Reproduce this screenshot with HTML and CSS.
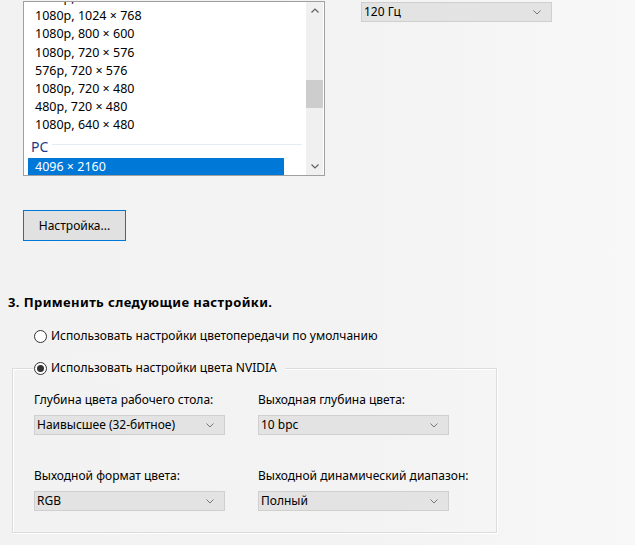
FILE: index.html
```html
<!DOCTYPE html>
<html lang="ru">
<head>
<meta charset="utf-8">
<link rel="stylesheet" href="styles.css">
</head>
<body>
<div class="page">
  <div class="top-row">
    <div class="listbox">
      <div class="list">
        <div class="list-items">
          <div class="item">1080p, 1152 × 864</div>
          <div class="item">1080p, 1024 × 768</div>
          <div class="item">1080p, 800 × 600</div>
          <div class="item">1080p, 720 × 576</div>
          <div class="item">576p, 720 × 576</div>
          <div class="item">1080p, 720 × 480</div>
          <div class="item">480p, 720 × 480</div>
          <div class="item">1080p, 640 × 480</div>
          <div class="group-header"><span>PC</span><span class="sep"></span></div>
          <div class="item selected">4096 × 2160</div>
        </div>
      </div>
      <div class="scrollbar">
        <div class="sb-arrow"><svg width="8" height="5" viewBox="0 0 8 5"><path d="M0.5 4.5 L4 1 L7.5 4.5" fill="none" stroke="#606060" stroke-width="1.2"/></svg></div>
        <div class="sb-track"><div class="sb-thumb"></div></div>
        <div class="sb-arrow"><svg width="8" height="5" viewBox="0 0 8 5"><path d="M0.5 0.5 L4 4 L7.5 0.5" fill="none" stroke="#606060" stroke-width="1.2"/></svg></div>
      </div>
    </div>
    <div class="select refresh"><span>120 Гц</span><svg class="chev" width="8" height="5" viewBox="0 0 8 5"><path d="M0.5 0.5 L4 4 L7.5 0.5" fill="none" stroke="#777" stroke-width="1"/></svg></div>
  </div>

  <button class="btn">Настройка...</button>

  <h3 class="heading">3. Применить следующие настройки.</h3>

  <div class="radio-row first">
    <span class="radio"></span><span>Использовать настройки цветопередачи по умолчанию</span>
  </div>

  <div class="group">
    <div class="radio-row legend">
      <span class="radio checked"></span><span>Использовать настройки цвета NVIDIA</span>
    </div>
    <div class="grid">
      <div class="field">
        <div class="label">Глубина цвета рабочего стола:</div>
        <div class="select"><span>Наивысшее (32-битное)</span><svg class="chev" width="8" height="5" viewBox="0 0 8 5"><path d="M0.5 0.5 L4 4 L7.5 0.5" fill="none" stroke="#777" stroke-width="1"/></svg></div>
      </div>
      <div class="field">
        <div class="label">Выходная глубина цвета:</div>
        <div class="select"><span>10 bpc</span><svg class="chev" width="8" height="5" viewBox="0 0 8 5"><path d="M0.5 0.5 L4 4 L7.5 0.5" fill="none" stroke="#777" stroke-width="1"/></svg></div>
      </div>
      <div class="field">
        <div class="label">Выходной формат цвета:</div>
        <div class="select"><span>RGB</span><svg class="chev" width="8" height="5" viewBox="0 0 8 5"><path d="M0.5 0.5 L4 4 L7.5 0.5" fill="none" stroke="#777" stroke-width="1"/></svg></div>
      </div>
      <div class="field">
        <div class="label">Выходной динамический диапазон:</div>
        <div class="select"><span>Полный</span><svg class="chev" width="8" height="5" viewBox="0 0 8 5"><path d="M0.5 0.5 L4 4 L7.5 0.5" fill="none" stroke="#777" stroke-width="1"/></svg></div>
      </div>
    </div>
  </div>
</div>
</body>
</html>
```

FILE: styles.css
```css
html, body {
  margin: 0;
  padding: 0;
}
body {
  background: linear-gradient(to right, #f2f2f2 0%, #f3f3f3 60%, #f8f8f8 100%);
  font-family: "Noto Sans", "Open Sans", sans-serif;
  font-size: 12px;
  color: #000;
  width: 635px;
  height: 545px;
  overflow: hidden;
}
.page {
  padding-top: 1px;
}
.top-row {
  display: flex;
  align-items: flex-start;
  padding-left: 23px;
}
.listbox {
  width: 300px;
  height: 173px;
  border: 1px solid #a0a0a0;
  background: #fff;
  display: flex;
  overflow: hidden;
}
.list {
  flex: 1;
  overflow: hidden;
}
.list-items {
  margin-top: -13px;
}
.item {
  height: 18.2px;
  line-height: 18px;
  padding-left: 11px;
  white-space: nowrap;
  font-size: 12.5px;
}
.group-header {
  display: flex;
  align-items: center;
  height: 23px;
  padding-left: 7px;
  padding-right: 4px;
  color: #1c3a8a;
  font-size: 14px;
  line-height: 23px;
  gap: 4px;
}
.group-header .sep {
  flex: 1;
  height: 1px;
  background: #e3ecf6;
  margin-top: -4px;
}
.item.selected {
  margin-left: 4px;
  width: 256px;
  padding-left: 7px;
  height: 17px;
  line-height: 17px;
  background: #0078d7;
  color: #fff;
  box-sizing: border-box;
}
.scrollbar {
  width: 17px;
  margin-right: 1px;
  background: #f0f0f0;
  display: flex;
  flex-direction: column;
}
.sb-arrow {
  height: 17px;
  display: flex;
  align-items: center;
  justify-content: center;
}
.sb-track {
  flex: 1;
  padding-top: 61px;
}
.sb-thumb {
  height: 28px;
  background: #cdcdcd;
}
.select {
  display: flex;
  align-items: center;
  justify-content: space-between;
  box-sizing: border-box;
  height: 20px;
  border: 1px solid #cfcfcf;
  background: #e3e3e3;
  padding: 0 10px 0 2px;
  white-space: nowrap;
}
.select span {
  line-height: 18px;
}
.chev {
  flex: none;
}
.refresh {
  width: 191px;
  margin-left: 36px;
  margin-top: 1px;
}
.btn {
  display: block;
  margin: 34px 0 0 23px;
  width: 103px;
  height: 31px;
  border: 1px solid #0078d7;
  background: #e1e1e1;
  font-family: inherit;
  font-size: 12px;
  color: #000;
  padding: 0;
}
.heading {
  margin: 53px 0 0 8px;
  font-size: 13px;
  letter-spacing: 0.4px;
  font-weight: bold;
  line-height: 16px;
}
.radio-row {
  display: flex;
  align-items: center;
  gap: 4px;
  height: 18px;
  line-height: 18px;
  white-space: nowrap;
}
.radio-row.first {
  margin: 17px 0 0 34px;
}
.radio {
  width: 13px;
  height: 13px;
  box-sizing: border-box;
  border: 1px solid #333;
  border-radius: 50%;
  background: #fff;
  display: flex;
  align-items: center;
  justify-content: center;
}
.radio.checked::after {
  content: "";
  width: 7px;
  height: 7px;
  border-radius: 50%;
  background: #333;
}
.group {
  margin: 23px 0 0 12px;
  width: 485px;
  height: 165px;
  box-sizing: border-box;
  border: 1px solid #dcdcdc;
  box-shadow: inset 1px 1px 0 #fff, 1px 1px 0 #fff;
}
.radio-row.legend {
  width: max-content;
  margin: -10px 0 0 21px;
  padding-right: 8px;
  background: #f3f3f3;
}
.grid {
  display: grid;
  grid-template-columns: 191px 191px;
  column-gap: 33px;
  row-gap: 32px;
  padding: 14px 0 0 21px;
}
.label {
  line-height: 18px;
  height: 18px;
  margin-bottom: 6px;
  white-space: nowrap;
}
```
